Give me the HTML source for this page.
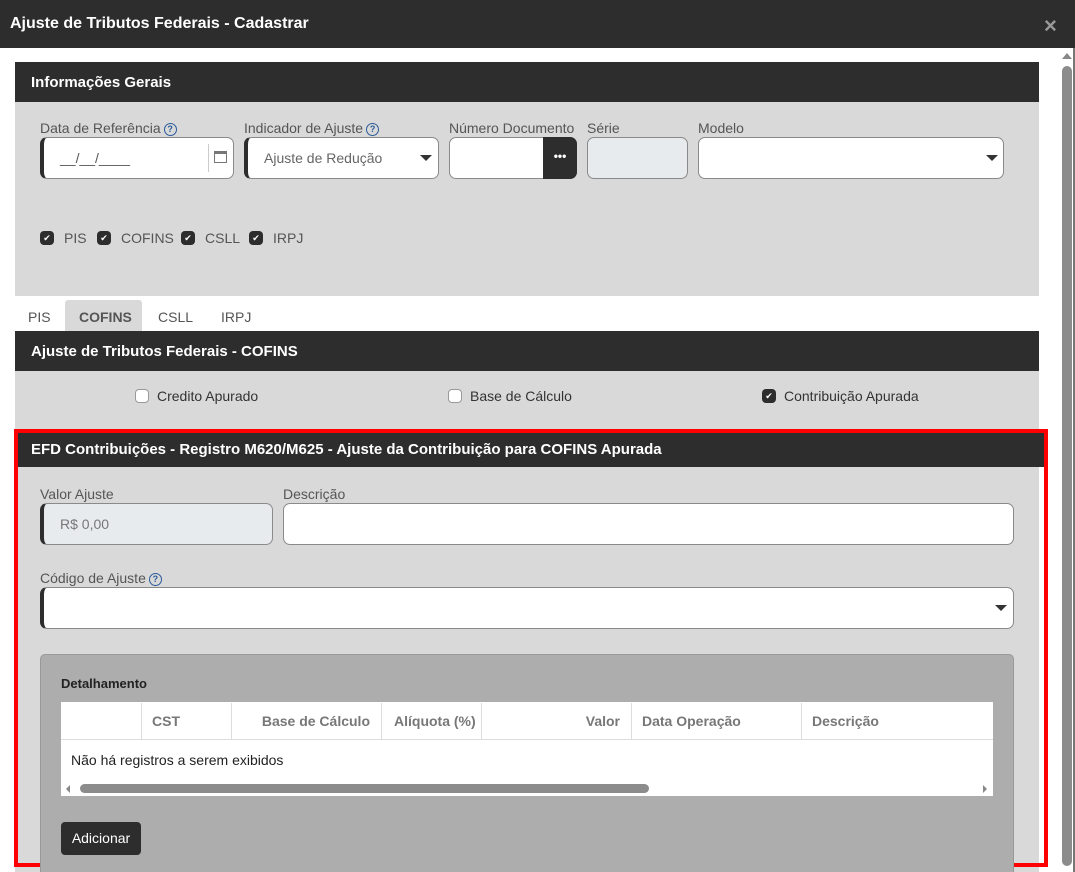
<!DOCTYPE html>
<html><head><meta charset="utf-8"><style>
*{box-sizing:border-box;margin:0;padding:0}
body{width:1075px;height:872px;overflow:hidden;background:#fff;font-family:"Liberation Sans",sans-serif;position:relative;color:#444}
.a{position:absolute}
.dark{background:#2d2d2d;color:#fff;font-weight:bold}
.gray{background:#d9d9d9}
.lbl{font-size:14px;color:#555}
.inp{background:#fff;border:1px solid #8a8a8a;border-radius:7px}
.lb{border-left:4px solid #2d2d2d}
.q{display:inline-block;width:13px;height:13px;border:1.5px solid #2a5a9a;border-radius:50%;font-size:9px;line-height:10px;text-align:center;color:#2a5a9a;font-weight:bold;vertical-align:1px;margin-left:3px}
.car{width:0;height:0;border-left:6px solid transparent;border-right:6px solid transparent;border-top:6px solid #333}
.cb{width:14px;height:14px;border-radius:4px;background:#2d2d2d;color:#fff;font-size:9px;line-height:14px;text-align:center}
.cbe{width:14px;height:14px;border-radius:4px;background:#fff;border:1px solid #999}
.t{font-size:14px}
.th{font-size:14px;color:#777;font-weight:bold}
</style></head><body>
<div class="a dark" style="left:0;top:0;width:1075px;height:48px;font-size:16px;padding:15px 10px">Ajuste de Tributos Federais - Cadastrar</div>
<div class="a" style="left:1044px;top:13px;color:#999;font-size:22px;font-weight:bold">×</div>
<div class="a" style="left:1073px;top:48px;width:2px;height:824px;background:#777"></div>
<div class="a" style="left:1062px;top:53px;width:0;height:0;border-left:5px solid transparent;border-right:5px solid transparent;border-bottom:6px solid #888"></div>
<div class="a" style="left:1062px;top:66px;width:10px;height:800px;background:#8c8c8c;border-radius:5px"></div>

<div class="a dark" style="left:15px;top:62px;width:1024px;height:40px;font-size:15px;padding:12px 16px">Informações Gerais</div>
<div class="a gray" style="left:15px;top:102px;width:1024px;height:194px"></div>
<div class="a lbl" style="left:40px;top:120px">Data de Referência<span class="q">?</span></div>
<div class="a inp lb" style="left:40px;top:137px;width:194px;height:42px"></div>
<div class="a" style="left:60px;top:150px;font-size:14px;color:#555">__/__/____</div>
<div class="a" style="left:208px;top:144px;width:1px;height:28px;background:#ccc"></div>
<div class="a" style="left:214px;top:151px;width:13px;height:12px;border:1.5px solid #777;border-top-width:3px"></div>
<div class="a lbl" style="left:244px;top:120px">Indicador de Ajuste<span class="q">?</span></div>
<div class="a inp lb" style="left:244px;top:137px;width:195px;height:42px"></div>
<div class="a" style="left:264px;top:150px;font-size:14px;color:#666">Ajuste de Redução</div>
<div class="a car" style="left:420px;top:155px"></div>
<div class="a lbl" style="left:449px;top:120px">Número Documento</div>
<div class="a inp" style="left:449px;top:137px;width:128px;height:42px"></div>
<div class="a" style="left:543px;top:137px;width:34px;height:42px;background:#2d2d2d;border-radius:0 7px 7px 0;color:#fff;font-weight:bold;text-align:center;line-height:38px;font-size:12px">•••</div>
<div class="a lbl" style="left:587px;top:120px">Série</div>
<div class="a inp" style="left:587px;top:137px;width:101px;height:42px;background:#e8ebee"></div>
<div class="a lbl" style="left:698px;top:120px">Modelo</div>
<div class="a inp" style="left:698px;top:137px;width:306px;height:42px"></div>
<div class="a car" style="left:986px;top:155px"></div>
<div class="a cb" style="left:40px;top:231px">✔</div><div class="a t" style="left:64px;top:230px;color:#555">PIS</div>
<div class="a cb" style="left:97px;top:231px">✔</div><div class="a t" style="left:121px;top:230px;color:#555">COFINS</div>
<div class="a cb" style="left:181px;top:231px">✔</div><div class="a t" style="left:205px;top:230px;color:#555">CSLL</div>
<div class="a cb" style="left:249px;top:231px">✔</div><div class="a t" style="left:273px;top:230px;color:#555">IRPJ</div>

<div class="a" style="left:65px;top:300px;width:77px;height:31px;background:#d9d9d9;border-radius:3px 3px 0 0"></div>
<div class="a t" style="left:28px;top:309px;color:#555">PIS</div>
<div class="a t" style="left:79px;top:309px;color:#555;font-weight:bold">COFINS</div>
<div class="a t" style="left:158px;top:309px;color:#555">CSLL</div>
<div class="a t" style="left:221px;top:309px;color:#555">IRPJ</div>

<div class="a dark" style="left:15px;top:331px;width:1024px;height:40px;font-size:15px;padding:12px 16px">Ajuste de Tributos Federais - COFINS</div>
<div class="a gray" style="left:15px;top:371px;width:1024px;height:501px"></div>
<div class="a cbe" style="left:135px;top:389px"></div><div class="a t" style="left:157px;top:388px;color:#333">Credito Apurado</div>
<div class="a cbe" style="left:448px;top:389px"></div><div class="a t" style="left:470px;top:388px;color:#333">Base de Cálculo</div>
<div class="a cb" style="left:762px;top:389px">✔</div><div class="a t" style="left:784px;top:388px;color:#333">Contribuição Apurada</div>

<div class="a" style="left:14px;top:429px;width:1034px;height:438px;border:4px solid #f00"></div>
<div class="a dark" style="left:18px;top:433px;width:1026px;height:34px;font-size:15px;padding:8px 13px">EFD Contribuições - Registro M620/M625 - Ajuste da Contribuição para COFINS Apurada</div>
<div class="a lbl" style="left:40px;top:486px">Valor Ajuste</div>
<div class="a inp lb" style="left:40px;top:503px;width:233px;height:42px;background:#e8ebee"></div>
<div class="a" style="left:60px;top:516px;font-size:14px;color:#777">R$ 0,00</div>
<div class="a lbl" style="left:283px;top:486px">Descrição</div>
<div class="a inp" style="left:283px;top:503px;width:731px;height:42px"></div>
<div class="a lbl" style="left:40px;top:570px">Código de Ajuste<span class="q">?</span></div>
<div class="a inp lb" style="left:40px;top:587px;width:974px;height:42px"></div>
<div class="a car" style="left:995px;top:605px"></div>

<div class="a" style="left:40px;top:654px;width:974px;height:218px;background:#adadad;border:1px solid #999;border-bottom:none;border-radius:5px 5px 0 0"></div>
<div class="a" style="left:61px;top:676px;font-size:13px;font-weight:bold;color:#222">Detalhamento</div>
<div class="a" style="left:61px;top:702px;width:932px;height:94px;background:#fff"></div>
<div class="a" style="left:61px;top:739px;width:932px;height:1px;background:#ddd"></div>
<div class="a" style="left:141px;top:703px;width:1px;height:36px;background:#ddd"></div>
<div class="a" style="left:231px;top:703px;width:1px;height:36px;background:#ddd"></div>
<div class="a" style="left:381px;top:703px;width:1px;height:36px;background:#ddd"></div>
<div class="a" style="left:481px;top:703px;width:1px;height:36px;background:#ddd"></div>
<div class="a" style="left:631px;top:703px;width:1px;height:36px;background:#ddd"></div>
<div class="a" style="left:801px;top:703px;width:1px;height:36px;background:#ddd"></div>
<div class="a th" style="left:152px;top:713px">CST</div>
<div class="a th" style="left:231px;top:713px;width:139px;text-align:right">Base de Cálculo</div>
<div class="a th" style="left:394px;top:713px">Alíquota (%)</div>
<div class="a th" style="left:481px;top:713px;width:139px;text-align:right">Valor</div>
<div class="a th" style="left:642px;top:713px">Data Operação</div>
<div class="a th" style="left:812px;top:713px">Descrição</div>
<div class="a t" style="left:71px;top:752px;color:#222">Não há registros a serem exibidos</div>
<div class="a" style="left:80px;top:784px;width:569px;height:9px;background:#8c8c8c;border-radius:5px"></div>
<div class="a" style="left:66px;top:785px;border-top:4px solid transparent;border-bottom:4px solid transparent;border-right:4px solid #888"></div>
<div class="a" style="left:983px;top:785px;border-top:4px solid transparent;border-bottom:4px solid transparent;border-left:4px solid #888"></div>
<div class="a" style="left:61px;top:822px;width:80px;height:33px;background:#2d2d2d;border-radius:4px;color:#fff;font-size:14px;text-align:center;line-height:33px">Adicionar</div>
</body></html>
